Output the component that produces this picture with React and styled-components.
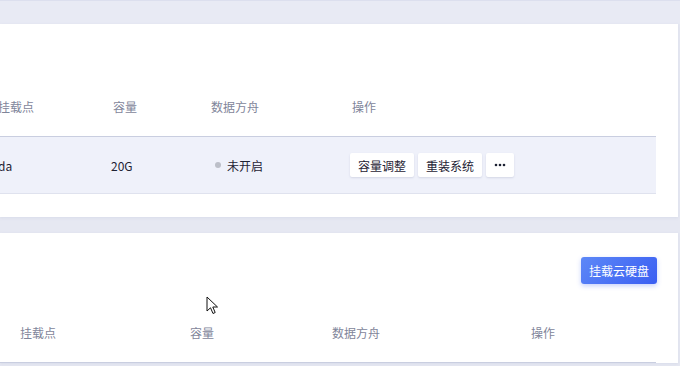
import React from 'react';
import styled, { createGlobalStyle } from 'styled-components';

const GlobalStyle = createGlobalStyle`
  html, body {
    margin: 0;
    padding: 0;
    background: #e6e8f2;
    font-family: "Noto Sans CJK SC", "Noto Sans", sans-serif;
    font-size: 12px;
    overflow: hidden;
  }
`;

const Page = styled.div`
  position: relative;
  width: 680px;
  height: 366px;
  overflow: hidden;
  background: #e6e8f2;
  border-top: 1px solid #dcdfee;
  box-sizing: border-box;
`;

const TopBand = styled.div`
  height: 23px;
  background: #e8eaf4;
`;

const Card = styled.section`
  background: #fff;
  margin-right: 2px;
  margin-top: ${(p) => p.$gap || 0}px;
  padding: ${(p) => p.$padTop}px 22px ${(p) => p.$padBottom}px 0;
  box-shadow: 0 1px 3px rgba(120, 128, 170, 0.12);
  overflow: hidden;
`;

const Toolbar = styled.div`
  display: flex;
  justify-content: flex-end;
  padding-right: 0;
  margin-bottom: 18px;
`;

const PrimaryButton = styled.button`
  width: 76px;
  height: 27px;
  border: none;
  border-radius: 3px;
  background: linear-gradient(135deg, #5d88f7 0%, #3a5ef2 100%);
  box-shadow: 0 2px 5px rgba(58, 94, 242, 0.28);
  color: #fff;
  font-family: inherit;
  font-size: 12px;
  padding: 0;
  margin-right: -1px;
`;

const Table = styled.div`
  margin-left: ${(p) => p.$offset}px;
`;

const Row = styled.div`
  display: grid;
  grid-template-columns: ${(p) => p.$cols};
  align-items: center;
  height: ${(p) => (p.$head ? 60 : 56)}px;
  background: ${(p) => (p.$head ? '#fff' : '#eff1fa')};
  border-bottom: 1px solid ${(p) => (p.$head ? '#c9cee0' : '#dfe2ee')};
`;

const HeadCell = styled.div`
  padding-left: 20px;
  color: #7f859a;
  font-size: 12px;
`;

const Cell = styled.div`
  padding-left: ${(p) => p.$pad ?? 20}px;
  color: #1e2233;
  font-size: 12px;
  display: flex;
  align-items: center;
  gap: 4px;
`;

const Status = styled.span`
  display: inline-flex;
  align-items: center;
  gap: 6px;
  margin-left: 4px;
`;

const Dot = styled.i`
  width: 6px;
  height: 6px;
  border-radius: 50%;
  background: #bcbfc8;
`;

const GhostButton = styled.button`
  height: 24px;
  width: ${(p) => p.$w}px;
  border: none;
  border-radius: 2px;
  background: #fff;
  box-shadow: 0 1px 2px rgba(90, 100, 140, 0.18);
  color: #1e2233;
  font-family: inherit;
  font-size: 12px;
  padding: 0;
  display: flex;
  align-items: center;
  justify-content: center;
`;

const Cursor = styled.svg`
  position: absolute;
  left: 206px;
  top: 295px;
`;

const cols1 = '115px 98px 141px 1fr';
const cols2 = '170px 142px 199px 1fr';

const headers = ['挂载点', '容量', '数据方舟', '操作'];

const MoreIcon = () => (
  <svg width="12" height="4" viewBox="0 0 12 4">
    <circle cx="2" cy="2" r="1.3" fill="#1e2233" />
    <circle cx="6" cy="2" r="1.3" fill="#1e2233" />
    <circle cx="10" cy="2" r="1.3" fill="#1e2233" />
  </svg>
);

const App = () => {
  return (
    <>
      <GlobalStyle />
      <Page>
        <TopBand />
        <Card $padTop={52} $padBottom={23}>
          <Table $offset={-22}>
            <Row $head $cols={cols1}>
              {headers.map((h) => (
                <HeadCell key={h}>{h}</HeadCell>
              ))}
            </Row>
            <Row $cols={cols1}>
              <Cell>da</Cell>
              <Cell $pad={18}>20G</Cell>
              <Cell>
                <Status>
                  <Dot />
                  未开启
                </Status>
              </Cell>
              <Cell $pad={18}>
                <GhostButton $w={64}>容量调整</GhostButton>
                <GhostButton $w={64}>重装系统</GhostButton>
                <GhostButton $w={28}>
                  <MoreIcon />
                </GhostButton>
              </Cell>
            </Row>
          </Table>
        </Card>
        <Card $gap={16} $padTop={24} $padBottom={0}>
          <Toolbar>
            <PrimaryButton>挂载云硬盘</PrimaryButton>
          </Toolbar>
          <Table $offset={0}>
            <Row $head $cols={cols2}>
              {headers.map((h) => (
                <HeadCell key={h}>{h}</HeadCell>
              ))}
            </Row>
          </Table>
        </Card>
        <Cursor width="14" height="20" viewBox="0 0 14 20">
          <path
            d="M1 1 L1 15 L4.5 11.8 L7 17.5 L9.2 16.5 L6.8 11 L11.5 11 Z"
            fill="#fff"
            stroke="#111"
            strokeWidth="1"
            strokeLinejoin="round"
          />
        </Cursor>
      </Page>
    </>
  );
};

export default App;
